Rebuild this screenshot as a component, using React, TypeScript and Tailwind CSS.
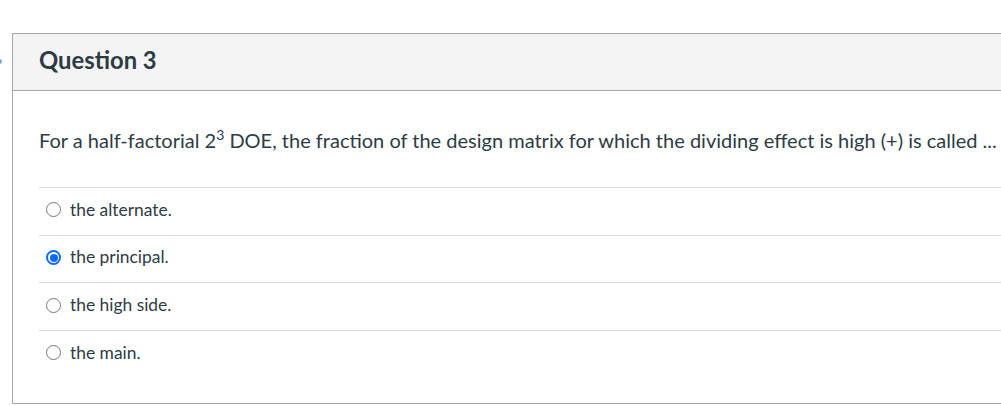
import React from "react";

const answers = [
  { text: "the alternate.", checked: false },
  { text: "the principal.", checked: true },
  { text: "the high side.", checked: false },
  { text: "the main.", checked: false },
];

function Radio({ checked }: { checked: boolean }) {
  if (checked) {
    return (
      <span className="w-[15px] h-[15px] rounded-full border-2 border-[#0a6cff] flex items-center justify-center shrink-0">
        <span className="w-[8px] h-[8px] rounded-full bg-[#0a6cff]" />
      </span>
    );
  }
  return <span className="w-[15px] h-[15px] rounded-full border border-[#767676] shrink-0" />;
}

export default function App() {
  return (
    <div className="w-[1001px] h-[406px] bg-white overflow-hidden relative" style={{ fontFamily: "Lato, 'Noto Sans', sans-serif" }}>
      <span className="absolute left-[-3px] top-[59px] w-[5px] h-[5px] rounded-full bg-[#7aa7d6]" />
      <div className="pt-[33px] pl-[12px]">
        <div className="w-[1000px] h-[371px] border border-[#a8a8a8] border-r-0 flex flex-col">
          <div className="h-[57px] bg-[#f4f4f4] border-b border-[#a8a8a8] flex items-center pl-[26px] pb-[2px]">
            <h2 className="text-[23.8px] font-bold text-[#2d3b45] leading-none">Question 3</h2>
          </div>
          <div className="pl-[26px] pt-[36px]">
            <p className="text-[20px] text-[#2d3b45] leading-[26px] whitespace-nowrap">
              For a half-factorial 2<sup className="text-[14px] relative top-[-8px]">3</sup> DOE, the fraction of the design matrix for which the dividing effect is high (+) is called ...
            </p>
            <div className="mt-[34px]">
              {answers.map((a) => (
                <div key={a.text} className="border-t border-[#dcdcdc] h-[47.7px] flex items-center gap-[9px] pl-[7px] pb-[3px]">
                  <Radio checked={a.checked} />
                  <span className="text-[17.4px] text-[#2d3b45]">{a.text}</span>
                </div>
              ))}
            </div>
          </div>
        </div>
      </div>
    </div>
  );
}
